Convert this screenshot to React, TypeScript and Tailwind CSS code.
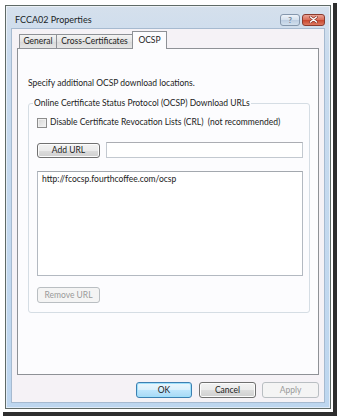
import React from "react";

function Btn({
  children,
  className = "",
  variant = "normal",
}: {
  children: React.ReactNode;
  className?: string;
  variant?: "normal" | "focus" | "disabled";
}) {
  const v =
    variant === "focus"
      ? "border-[#3c7fb1] bg-[linear-gradient(to_bottom,#eaf6fd_0%,#d9f0fc_50%,#bee6fd_51%,#a7d9f5_100%)] text-[#1b1b1b] shadow-[inset_0_0_0_1px_#9fe0fb]"
      : variant === "disabled"
      ? "border-[#b9bec2] bg-[#f4f4f4] text-[#9a9a9a]"
      : "border-[#707070] bg-[linear-gradient(to_bottom,#f2f2f2_0%,#ebebeb_50%,#dddddd_51%,#cfcfcf_100%)] text-[#1b1b1b] shadow-[inset_0_0_0_1px_#fcfcfc]";
  return (
    <div
      className={`flex items-center justify-center rounded-[3px] border text-[8.5px] leading-none ${v} ${className}`}
    >
      {children}
    </div>
  );
}

export default function App() {
  return (
    <div
      className="w-[341px] h-[419px] bg-white pl-[3px] pt-[3px] text-[#222222]"
      style={{ fontFamily: "Lato, 'Open Sans', sans-serif" }}
    >
      <div className="w-[334px] h-[413px] pl-[2px] pt-[2px] pr-[2px] pb-[3px] border-r-[4px] border-b-[4px] border-[#2e2e2e]">
        <div className="w-[326px] h-[404px] border border-[#5f6a66] flex flex-col bg-[linear-gradient(to_bottom,#d5e0ec_0%,#c9dbee_12%,#bdd6ef_100%)] shadow-[inset_0_0_0_1px_rgba(255,255,255,0.55)]">
          {/* Title bar */}
          <div className="h-[22px] flex items-center pl-[9px] pr-[5px] pt-[5px] shrink-0">
            <div className="flex-1 text-[9px] leading-none text-[#1a1f28]">FCCA02 Properties</div>
            <div className="flex gap-[2px]">
              <div className="w-[20px] h-[12px] rounded-[3px] border border-[#8597ac] bg-[linear-gradient(to_bottom,#eef3f9_0%,#d3dfec_50%,#bccde1_51%,#d2e0ee_100%)] flex items-center justify-center text-[8px] font-bold leading-none text-[#6f8296]">
                ?
              </div>
              <div className="w-[23px] h-[12px] rounded-[3px] border border-[#8a3b2e] bg-[linear-gradient(to_bottom,#eaa394_0%,#d86a55_50%,#c8452d_51%,#dc7a62_100%)] flex items-center justify-center">
                <svg width="9" height="7" viewBox="0 0 9 7">
                  <path d="M1.5 1 L7.5 6 M7.5 1 L1.5 6" stroke="#7a2a20" strokeWidth="2.6" strokeLinecap="round" />
                  <path d="M1.5 1 L7.5 6 M7.5 1 L1.5 6" stroke="#ffffff" strokeWidth="1.5" strokeLinecap="round" />
                </svg>
              </div>
            </div>
          </div>

          {/* Client area */}
          <div className="mx-[5px] h-[375px] shrink-0 border border-[#a6bad0] bg-[#f5f2f6] flex flex-col pt-[2px] pb-[4px]">
            {/* Tabs */}
            <div className="h-[17px] flex items-end pl-[7px] shrink-0">
              <div className="w-[38px] h-[14px] border border-b-0 border-[#8e9196] bg-[linear-gradient(to_bottom,#f3f3f3,#e3e3e3_50%,#d9d9d9_51%,#e6e6e6)] flex items-center justify-center text-[8.5px] leading-none">
                General
              </div>
              <div className="-ml-px w-[77px] h-[14px] border border-b-0 border-[#8e9196] bg-[linear-gradient(to_bottom,#f3f3f3,#e3e3e3_50%,#d9d9d9_51%,#e6e6e6)] flex items-center justify-center text-[8.5px] leading-none">
                Cross-Certificates
              </div>
              <div className="relative z-10 -ml-px -mb-px w-[35px] h-[18px] border border-b-0 border-[#8e9196] bg-[#fcfcfe] flex items-start justify-center pt-[4px] text-[8.5px] leading-none">
                OCSP
              </div>
            </div>

            {/* Tab panel */}
            <div className="mx-[5px] h-[327px] shrink-0 border border-[#8e9196] bg-[#fcfcfe] flex flex-col pt-[29px] pl-[10px] pr-[8px]">
              <div className="text-[8.5px] leading-[11px]">Specify additional OCSP download locations.</div>

              {/* Group box */}
              <div className="mt-[14px] h-[210px] rounded-[3px] border border-[#d5dde4] flex flex-col pl-[8px] pr-[6px]">
                <div className="-mt-[6px] -ml-[4px] w-fit px-[1px] bg-[#fcfcfe] text-[8.5px] leading-[11px]">
                  Online Certificate Status Protocol (OCSP) Download URLs
                </div>

                <div className="mt-[8px] h-[11px] flex items-center gap-[3px]">
                  <div className="w-[10px] h-[10px] border border-[#8c8c8c] bg-[linear-gradient(135deg,#d6d6d6,#f4f4f4)] shadow-[inset_0_0_0_1px_#f0f0f0]" />
                  <div className="text-[8.5px] leading-[11px] whitespace-pre">
                    {"Disable Certificate Revocation Lists (CRL)  (not recommended)"}
                  </div>
                </div>

                <div className="mt-[14px] h-[16px] flex items-center">
                  <Btn className="w-[63px] h-[15px]">Add URL</Btn>
                  <div className="ml-[6px] flex-1 h-[16px] border border-[#c3c9d0] border-t-[#abadb3] bg-white" />
                </div>

                <div className="mt-[13px] h-[105px] border border-[#b3b9c1] border-t-[#a3a8ae] bg-white pl-[4px] pt-[2px] text-[8.5px] leading-[11px]">
                  http://fcocsp.fourthcoffee.com/ocsp
                </div>

                <Btn variant="disabled" className="mt-[11px] w-[63px] h-[16px]">
                  Remove URL
                </Btn>
              </div>
            </div>

            {/* Bottom buttons */}
            <div className="mt-[7px] h-[16px] flex justify-end pr-[5px] shrink-0">
              <Btn variant="focus" className="w-[56px] h-[16px]">
                OK
              </Btn>
              <Btn className="ml-[7px] w-[57px] h-[16px]">Cancel</Btn>
              <Btn variant="disabled" className="ml-[6px] w-[57px] h-[16px]">
                Apply
              </Btn>
            </div>
          </div>
        </div>
      </div>
    </div>
  );
}
